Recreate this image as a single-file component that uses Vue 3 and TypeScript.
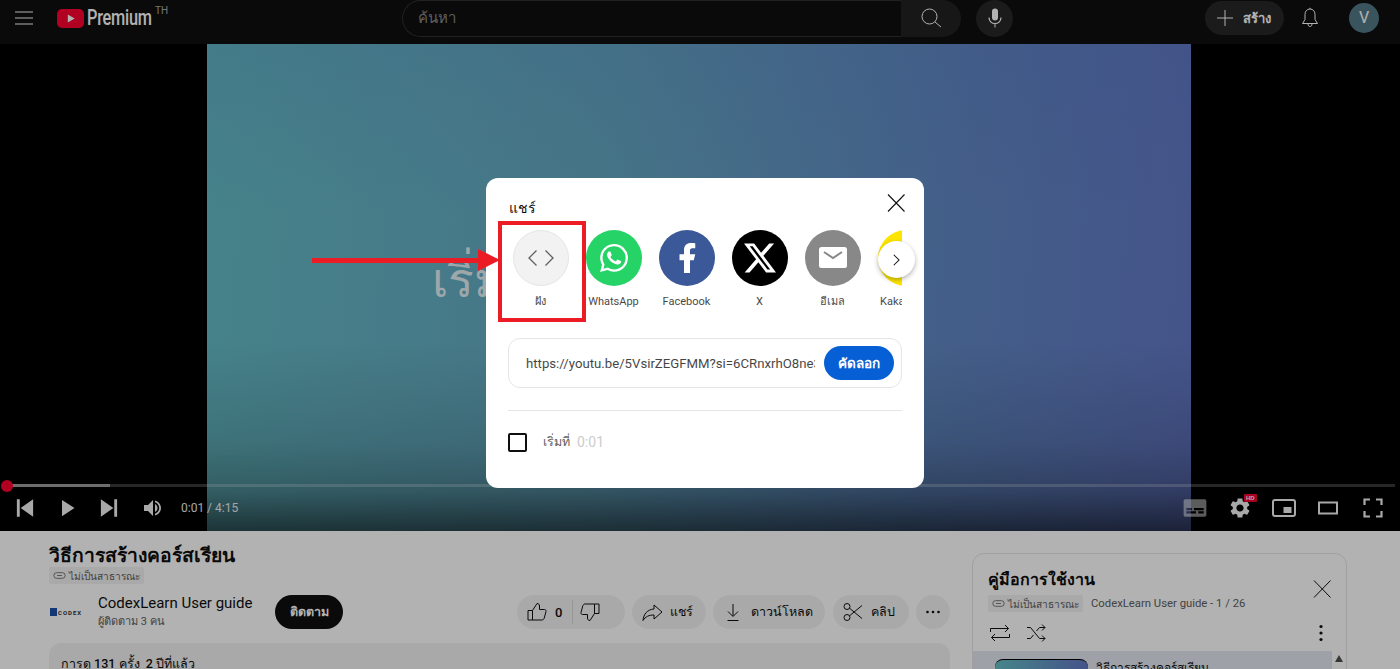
<script setup lang="ts">
interface Target { label: string; kind: string }
const targets: Target[] = [
  { label: 'ฝัง', kind: 'embed' },
  { label: 'WhatsApp', kind: 'whatsapp' },
  { label: 'Facebook', kind: 'facebook' },
  { label: 'X', kind: 'x' },
  { label: 'อีเมล', kind: 'mail' },
  { label: 'KakaoTalk', kind: 'kakao' },
]
</script>

<template>
  <div class="page">
    <header class="masthead">
      <div class="start">
        <svg class="burger" viewBox="0 0 18 14" width="18" height="14" fill="none" stroke="#fff" stroke-width="1"><path d="M0 1h18M0 7h18M0 13h18" /></svg>
        <svg class="yt" viewBox="0 0 27 19" width="27" height="19"><rect width="27" height="19" rx="5" fill="#ff0033" /><path d="M10.800 5.500v8l6.800-4z" fill="#fff" /></svg>
        <span class="premium">Premium</span>
        <span class="country">TH</span>
      </div>
      <div class="search">
        <div class="search-input">ค้นหา</div>
        <div class="search-btn">
          <svg viewBox="0 0 24 24" width="24" height="24" fill="none" stroke="#fff" stroke-width="1"><circle cx="10.500" cy="10.500" r="7.500" /><path d="M16 16l6 5" /></svg>
        </div>
      </div>
      <div class="mic">
        <svg viewBox="0 0 24 24" width="24" height="24" fill="#fff"><rect x="9" y="2.500" width="6" height="12" rx="3" /><path d="M6 11.500c0 3.500 2.600 6 6 6s6-2.500 6-6" fill="none" stroke="#fff" stroke-width="1.200" /><path d="M11.500 17h1v4.500h-1z" /></svg>
      </div>
      <div class="end">
        <div class="create">
          <svg viewBox="0 0 24 24" width="24" height="24" fill="none" stroke="#fff" stroke-width="1"><path d="M12 4v16M4 12h16" /></svg>
          <span>สร้าง</span>
        </div>
        <svg class="bell" viewBox="0 0 24 24" width="24" height="24" fill="none" stroke="#fff" stroke-width="1"><path d="M12 3c-3.200 0-5 2.500-5 5.500v5L4.500 17.500h15L17 13.500v-5C17 5.500 15.200 3 12 3zM10 18c0 1.500.8 2.500 2 2.500s2-1 2-2.500M12 1.800V3" /></svg>
        <div class="avatar">V</div>
      </div>
    </header>

    <section class="video">
      <div class="frame">
        <span class="frame-text">เริ่มต้นใช้งาน</span>
      </div>
      <div class="shade"></div>
      <div class="player">
        <div class="progress">
          <div class="buffer"></div>
          <div class="dot"></div>
        </div>
        <div class="controls">
          <button class="ctl"><svg viewBox="0 0 24 24" width="30" height="30" fill="#fff"><path d="M5.500 5h2.300v14H5.500zM18.500 5v14L8.500 12z" /></svg></button>
          <button class="ctl"><svg viewBox="0 0 24 24" width="30" height="30" fill="#fff"><path d="M8 5.500v13L18 12z" /></svg></button>
          <button class="ctl"><svg viewBox="0 0 24 24" width="30" height="30" fill="#fff"><path d="M16.200 5h2.300v14h-2.300zM5.500 5v14l10-7z" /></svg></button>
          <button class="ctl"><svg viewBox="0 0 24 24" width="24" height="24" fill="#fff"><path d="M5 9v6h4l5 5V4L9 9H5zM18.500 12c0-1.770-1-3.290-2.500-4.030v8.050c1.500-.73 2.500-2.250 2.500-4.020z" /><path d="M16 4.500v1.800c2.400.8 4.200 3 4.200 5.700s-1.800 4.900-4.200 5.700v1.800c3.400-.9 6-3.900 6-7.500s-2.600-6.600-6-7.500z" /></svg></button>
          <span class="time">0:01 / 4:15</span>
          <div class="controls-end">
            <button class="ctl wide"><svg viewBox="0 0 24 24" width="26" height="26" class="dim"><path fill="#fff" fill-rule="evenodd" d="M3 4h18a1.500 1.500 0 0 1 1.500 1.500v13A1.500 1.500 0 0 1 21 20H3a1.500 1.500 0 0 1-1.500-1.500v-13A1.500 1.500 0 0 1 3 4zm1 8v2h5v-2zm7 0v2h9v-2zm-7 3v2h9v-2zm11 0v2h5v-2z" /></svg></button>
            <button class="ctl wide gear">
              <svg viewBox="0 0 24 24" width="24" height="24" fill="#fff"><path d="M19.140 12.940c.04-.3.06-.61.06-.94 0-.32-.02-.64-.07-.94l2.030-1.580a.49.49 0 0 0 .12-.61l-1.920-3.320a.488.488 0 0 0-.59-.22l-2.390.96c-.5-.38-1.030-.7-1.620-.94l-.36-2.540a.484.484 0 0 0-.48-.41h-3.840c-.24 0-.43.17-.47.41l-.36 2.540c-.59.24-1.130.57-1.620.94l-2.390-.96c-.22-.08-.47 0-.59.22L2.740 8.870c-.12.21-.08.47.12.61l2.030 1.580c-.05.3-.09.63-.09.94s.02.64.07.94l-2.030 1.580a.49.49 0 0 0-.12.61l1.920 3.320c.12.22.37.29.59.22l2.390-.96c.5.38 1.030.7 1.620.94l.36 2.540c.05.24.24.41.48.41h3.840c.24 0 .44-.17.47-.41l.36-2.540c.59-.24 1.130-.56 1.620-.94l2.390.96c.22.08.47 0 .59-.22l1.920-3.320c.12-.22.07-.47-.12-.61l-2.010-1.580zM12 15.600c-1.980 0-3.600-1.620-3.600-3.600s1.620-3.600 3.600-3.600 3.600 1.620 3.600 3.600-1.620 3.600-3.600 3.600z" /></svg>
              <span class="hd">HD</span>
            </button>
            <button class="ctl wide"><svg viewBox="0 0 24 24" width="24" height="24" fill="none" stroke="#fff" stroke-width="2"><rect x="1" y="4" width="22" height="16" rx="2" /><rect x="11.500" y="11" width="8" height="6" fill="#fff" stroke="none" /></svg></button>
            <button class="ctl wide"><svg viewBox="0 0 24 24" width="24" height="24" fill="none" stroke="#fff" stroke-width="2"><rect x="3" y="6.500" width="18" height="11" /></svg></button>
            <button class="ctl wide"><svg viewBox="0 0 24 24" width="24" height="24" fill="none" stroke="#fff" stroke-width="2.200"><path d="M3.500 9V3.500H9M15 3.500h5.500V9M20.500 15v5.500H15M9 20.500H3.500V15" /></svg></button>
          </div>
        </div>
      </div>
    </section>

    <section class="below">
      <div class="primary">
        <h1 class="title">วิธีการสร้างคอร์สเรียน</h1>
        <div class="badge">
          <svg viewBox="0 0 16 10" width="13" height="9" fill="none" stroke="#606060" stroke-width="1"><rect x="1" y="1.500" width="14" height="7" rx="3.500" /><path d="M5 5h6" /></svg>
          ไม่เป็นสาธารณะ
        </div>
        <div class="meta">
          <div class="channel-logo"><i></i><span>CODEX</span></div>
          <div class="channel">
            <div class="channel-name">CodexLearn User guide</div>
            <div class="channel-subs">ผู้ติดตาม 3 คน</div>
          </div>
          <div class="subscribe">ติดตาม</div>
          <div class="actions">
            <div class="pill like">
              <svg viewBox="0 0 24 24" width="24" height="24" fill="none" stroke="#0f0f0f" stroke-width="1"><path d="M3 10.500h4.500V20H3zM7.500 10.500 12 3.500c1.600 0 2.500 1 2.500 2.500v3.500h5c1.100 0 1.800 1 1.500 2l-1.800 6.700c-.3.900-1 1.800-2.200 1.800H7.500" /></svg>
              <span class="count">0</span>
              <span class="sep"></span>
              <svg viewBox="0 0 24 24" width="24" height="24" fill="none" stroke="#0f0f0f" stroke-width="1"><path d="M21 13.500h-4.500V4H21zM16.500 13.500 12 20.500c-1.600 0-2.500-1-2.500-2.500v-3.500h-5c-1.100 0-1.800-1-1.500-2l1.800-6.700C5.100 4.900 5.800 4 7 4h9.500" /></svg>
            </div>
            <div class="pill share">
              <svg viewBox="0 0 24 24" width="24" height="24" fill="none" stroke="#0f0f0f" stroke-width="1"><path d="M14 5l8 7-8 7v-4c-5 0-8.500 1.500-11 5.500C3.500 14 7.500 9.500 14 9z" /></svg>
              <span>แชร์</span>
            </div>
            <div class="pill download">
              <svg viewBox="0 0 24 24" width="24" height="24" fill="none" stroke="#0f0f0f" stroke-width="1"><path d="M12 4v12M7 11.500l5 5 5-5M6.500 20.500h11" /></svg>
              <span>ดาวน์โหลด</span>
            </div>
            <div class="pill clip">
              <svg viewBox="0 0 24 24" width="24" height="24" fill="none" stroke="#0f0f0f" stroke-width="1"><circle cx="6" cy="6.500" r="3" /><circle cx="6" cy="17.500" r="3" /><path d="M8.500 8.200 21 18.500M8.500 15.800 21 5.500" /></svg>
              <span>คลิป</span>
            </div>
            <div class="more">
              <svg viewBox="0 0 24 24" width="24" height="24" fill="#0f0f0f"><circle cx="6.500" cy="12" r="1.300" /><circle cx="12" cy="12" r="1.300" /><circle cx="17.500" cy="12" r="1.300" /></svg>
            </div>
          </div>
        </div>
        <div class="description">การดู 131 ครั้ง&nbsp;&nbsp;2 ปีที่แล้ว</div>
      </div>

      <aside class="playlist">
        <div class="pl-head">
          <div class="pl-info">
            <div class="pl-title">คู่มือการใช้งาน</div>
            <div class="pl-sub">
              <div class="badge pl-badge">
                <svg viewBox="0 0 16 10" width="13" height="9" fill="none" stroke="#606060" stroke-width="1"><rect x="1" y="1.500" width="14" height="7" rx="3.500" /><path d="M5 5h6" /></svg>
                ไม่เป็นสาธารณะ
              </div>
              <span class="pl-owner">CodexLearn User guide - 1 / 26</span>
            </div>
          </div>
          <svg class="pl-close" viewBox="0 0 24 24" width="24" height="24" fill="none" stroke="#0f0f0f" stroke-width="1"><path d="M4 3.500l16.500 17M20.500 3.500 4 20.500" /></svg>
        </div>
        <div class="pl-tools">
          <svg viewBox="0 0 24 24" width="24" height="24" fill="none" stroke="#0f0f0f" stroke-width="1"><path d="M2.500 11V7.500h18M17 4l3.500 3.500L17 11M21.500 13v3.500h-18M7 20l-3.500-3.500L7 13" /></svg>
          <svg viewBox="0 0 24 24" width="24" height="24" fill="none" stroke="#0f0f0f" stroke-width="1"><path d="M3 6.500h3.500l9 11H21M3 17.500h3.500l3-3.600M12.500 10l3-3.500H21M18 3.500l3 3-3 3M18 14.500l3 3-3 3" /></svg>
          <svg class="pl-kebab" viewBox="0 0 24 24" width="24" height="24" fill="#0f0f0f"><circle cx="12" cy="5.500" r="1.600" /><circle cx="12" cy="12" r="1.600" /><circle cx="12" cy="18.500" r="1.600" /></svg>
        </div>
        <div class="pl-body">
          <div class="pl-row">
            <div class="pl-thumb"></div>
            <div class="pl-item-title">วิธีการสร้างคอร์สเรียน</div>
          </div>
          <div class="pl-scroll"><i></i></div>
        </div>
      </aside>
    </section>

    <div class="scrim"></div>

    <div class="dialog">
      <div class="dialog-head">
        <span class="dialog-title">แชร์</span>
        <svg class="dialog-close" viewBox="0 0 24 24" width="24" height="24" fill="none" stroke="#0f0f0f" stroke-width="1.100"><path d="M4 3.500l16.500 17M20.500 3.500 4 20.500" /></svg>
      </div>
      <div class="targets">
        <div v-for="t in targets" :key="t.kind" class="target">
          <div class="disc" :class="t.kind">
            <svg v-if="t.kind === 'embed'" viewBox="0 0 28 20" width="30" height="20" fill="none" stroke="#606060" stroke-width="1.300"><path d="M9.500 2.500 2 10l7.500 7.500M18.500 2.500 26 10l-7.500 7.500" /></svg>
            <svg v-else-if="t.kind === 'whatsapp'" viewBox="0 0 24 24" width="28" height="28" fill="#fff"><path d="M17.472 14.382c-.297-.149-1.758-.867-2.030-.967-.273-.099-.471-.148-.67.150-.197.297-.767.966-.94 1.164-.173.199-.347.223-.644.075-.297-.15-1.255-.463-2.390-1.475-.883-.788-1.480-1.761-1.653-2.059-.173-.297-.018-.458.130-.606.134-.133.298-.347.446-.52.149-.174.198-.298.298-.497.099-.198.050-.371-.025-.52-.075-.149-.669-1.612-.916-2.207-.242-.579-.487-.5-.669-.51-.173-.008-.371-.010-.570-.010-.198 0-.52.074-.792.372-.272.297-1.040 1.016-1.040 2.479 0 1.462 1.065 2.875 1.213 3.074.149.198 2.096 3.200 5.077 4.487.709.306 1.262.489 1.694.625.712.227 1.360.195 1.871.118.571-.085 1.758-.719 2.006-1.413.248-.694.248-1.289.173-1.413-.074-.124-.272-.198-.57-.347m-5.421 7.403h-.004a9.870 9.870 0 0 1-5.031-1.378l-.361-.214-3.741.982.998-3.648-.235-.374a9.860 9.860 0 0 1-1.510-5.260c.001-5.450 4.436-9.884 9.888-9.884 2.640 0 5.122 1.030 6.988 2.898a9.825 9.825 0 0 1 2.893 6.994c-.003 5.450-4.437 9.884-9.885 9.884m8.413-18.297A11.815 11.815 0 0 0 12.050 0C5.495 0 .16 5.335.157 11.892c0 2.096.547 4.142 1.588 5.945L.057 24l6.305-1.654a11.882 11.882 0 0 0 5.683 1.448h.005c6.554 0 11.890-5.335 11.893-11.893a11.821 11.821 0 0 0-3.480-8.413z" /></svg>
            <svg v-else-if="t.kind === 'facebook'" viewBox="0 0 24 24" width="36" height="36" fill="#fff"><path d="M14 13.500h2.500l1-4H14v-2c0-1.030 0-2 2-2h1.500V2.140c-.326-.043-1.557-.14-2.857-.14C11.928 2 10 3.657 10 6.700v2.800H7v4h3V22h4v-8.500z" /></svg>
            <svg v-else-if="t.kind === 'x'" viewBox="0 0 24 24" width="32" height="32" fill="#fff"><path d="M18.901 1.153h3.680l-8.040 9.190L24 22.846h-7.406l-5.800-7.584-6.638 7.584H.474l8.600-9.830L0 1.154h7.594l5.243 6.932ZM17.610 20.644h2.039L6.486 3.240H4.298Z" /></svg>
            <svg v-else-if="t.kind === 'mail'" viewBox="0 0 28 22" width="28" height="22"><rect width="28" height="21" rx="2.500" fill="#fff" /><path d="M5 5l9 6 9-6" fill="none" stroke="#888" stroke-width="2" /></svg>
          </div>
          <div class="target-label">{{ t.label }}</div>
        </div>
      </div>
      <div class="next">
        <svg viewBox="0 0 24 24" width="18" height="18" fill="none" stroke="#0f0f0f" stroke-width="1.400"><path d="M9 5l7 7-7 7" /></svg>
      </div>
      <div class="link">
        <span class="link-text">https://youtu.be/5VsirZEGFMM?si=6CRnxrhO8ne3</span>
        <div class="copy">คัดลอก</div>
      </div>
      <div class="divider"></div>
      <div class="start-at">
        <span class="check"></span>
        <span class="start-label">เริ่มที่</span>
        <span class="start-time">0:01</span>
      </div>
    </div>

    <div class="mark-box"></div>
    <div class="mark-arrow"></div>
  </div>
</template>

<style>
html, body { margin: 0; background: #fff; overflow: hidden; }
</style>

<style scoped>
.page {
  position: relative;
  width: 1400px;
  height: 669px;
  overflow: hidden;
  background: #fff;
  color: #0f0f0f;
  font-family: Roboto, "Noto Sans", sans-serif;
}
.masthead {
  box-sizing: border-box;
  height: 44px;
  padding-bottom: 8px;
  display: flex;
  align-items: center;
  background: #0f0f0f;
  color: #fff;
}
.start {
  width: 402px;
  flex: none;
  display: flex;
  align-items: center;
  position: relative;
}
.burger { margin-left: 15px; }
.yt { margin-left: 24px; }
.premium {
  margin-left: 3px;
  font-size: 22px;
  font-weight: 500;
  letter-spacing: -.3px;
  transform: scaleX(.74);
  transform-origin: left center;
  line-height: 24px;
}
.country {
  position: absolute;
  left: 155px;
  top: -1px;
  font-size: 10px;
  color: #aaa;
}
.search { display: flex; height: 37px; width: 559px; flex: none; }
.search-input {
  box-sizing: border-box;
  width: 499px;
  border: 1px solid #303030;
  border-right: 0;
  border-radius: 19px 0 0 19px;
  padding-left: 15px;
  font-size: 15px;
  line-height: 35px;
  color: #888;
}
.search-btn {
  width: 60px;
  background: #222;
  border-radius: 0 19px 19px 0;
  display: flex;
  align-items: center;
  justify-content: center;
}
.mic {
  margin-left: 15px;
  width: 37px;
  height: 37px;
  border-radius: 50%;
  background: #272727;
  display: flex;
  align-items: center;
  justify-content: center;
}
.end { margin-left: auto; padding-right: 21px; display: flex; align-items: center; }
.create {
  box-sizing: border-box;
  width: 79px;
  height: 34px;
  border-radius: 17px;
  background: #272727;
  display: flex;
  align-items: center;
  padding-left: 8px;
  gap: 6px;
  font-size: 13px;
  font-weight: 700;
}
.bell { margin-left: 14px; }
.avatar {
  margin-left: 27px;
  width: 30px;
  height: 30px;
  border-radius: 50%;
  background: #547987;
  text-align: center;
  line-height: 30px;
  font-size: 16px;
}

.video {
  position: relative;
  height: 487px;
  background: #000;
  display: flex;
  justify-content: center;
  padding-right: 2px;
}
.frame {
  box-sizing: border-box;
  width: 984px;
  background:
    linear-gradient(to bottom, rgba(70,100,190,.12), rgba(70,100,190,0) 35%),
    linear-gradient(95deg, #65bcc6 0%, #65a8c2 40%, #6188c4 75%, #6378c6 100%);
  display: flex;
  align-items: center;
  padding: 0 0 15px 225px;
}
.frame-text {
  font-size: 48px;
  font-weight: 300;
  color: rgba(255,255,255,.82);
  white-space: nowrap;
  font-family: "Open Sans", Roboto, sans-serif;
}
.shade {
  position: absolute;
  left: 0;
  right: 0;
  bottom: 0;
  height: 190px;
  background: linear-gradient(to bottom, rgba(0,0,0,0) 0%, rgba(0,0,0,.12) 53%, rgba(0,0,0,.28) 79%, rgba(0,0,0,.6) 100%);
}
.player { position: absolute; left: 0; right: 0; bottom: 0; }
.progress {
  position: relative;
  margin: 0 5px 0 4px;
  height: 3px;
  background: rgba(255,255,255,.22);
}
.buffer { width: 106px; height: 3px; background: rgba(255,255,255,.5); }
.dot {
  position: absolute;
  left: -3px;
  top: -4.500px;
  width: 12px;
  height: 12px;
  border-radius: 50%;
  background: #f03;
}
.controls {
  box-sizing: border-box;
  height: 44px;
  padding: 0 5px 2px 4px;
  display: flex;
  align-items: center;
}
.ctl {
  flex: none;
  width: 42px;
  height: 42px;
  padding: 0;
  border: 0;
  background: none;
  display: flex;
  align-items: center;
  justify-content: center;
  opacity: .95;
}
.ctl.wide { width: 44.500px; position: relative; }
.dim { opacity: .55; }
.time { margin-left: 9px; font-size: 12px; color: #eee; }
.controls-end { margin-left: auto; display: flex; }
.gear svg { margin-left: 1px; }
.hd {
  position: absolute;
  left: 27px;
  top: 7px;
  padding: 0 2px;
  background: #f03;
  color: #fff;
  border-radius: 1px;
  font-size: 6px;
  line-height: 8px;
  font-weight: 700;
}

.below { display: flex; padding: 22px 0 0 49px; height: 116px; }
.primary { width: 901px; flex: none; margin-top: -11px; }
.title { margin: 0; font-size: 19.300px; line-height: 28px; font-weight: 700; height: 25px; }
.badge {
  box-sizing: border-box;
  display: inline-flex;
  align-items: center;
  gap: 3px;
  height: 17px;
  padding: 0 4px;
  background: rgba(0,0,0,.05);
  border-radius: 2px;
  font-size: 10.100px;
  color: #606060;
  vertical-align: top;
  white-space: nowrap;
}
.meta { display: flex; align-items: center; height: 34px; margin-top: 9px; }
.channel-logo { width: 36px; display: flex; align-items: center; gap: 1px; flex: none; margin-left: 1px; }
.channel-logo i { width: 7px; height: 8px; background: #1d4fa8; flex: none; }
.channel-logo span { font-size: 6px; letter-spacing: 1px; font-weight: 700; color: #333; }
.channel { margin-left: 12px; width: 177px; flex: none; padding-top: 1px; }
.channel-name { font-size: 15px; line-height: 18px; white-space: nowrap; }
.channel-subs { font-size: 11px; line-height: 19px; color: #606060; }
.subscribe {
  width: 68px;
  height: 34px;
  border-radius: 17px;
  background: #0f0f0f;
  color: #fff;
  text-align: center;
  font-size: 12.500px;
  font-weight: 700;
  line-height: 34px;
}
.actions { margin-left: auto; display: flex; gap: 7px; }
.pill {
  box-sizing: border-box;
  height: 34px;
  border-radius: 17px;
  background: rgba(0,0,0,.05);
  display: flex;
  align-items: center;
  padding: 0 0 0 8px;
  gap: 6px;
  font-size: 12.500px;
  font-weight: 500;
  white-space: nowrap;
}
.like { width: 108px; gap: 0; }
.share { width: 74px; }
.download { width: 112px; gap: 6px; }
.clip { width: 76px; margin-left: 1px; }
.count { margin-left: 6px; font-size: 13px; }
.sep { width: 1px; height: 24px; background: rgba(0,0,0,.1); margin: 0 5px 0 10px; }
.more {
  width: 34px;
  height: 34px;
  border-radius: 50%;
  background: rgba(0,0,0,.05);
  display: flex;
  align-items: center;
  justify-content: center;
}
.description {
  margin-top: 14px;
  padding: 11px 12px;
  height: 60px;
  border-radius: 12px;
  background: rgba(0,0,0,.05);
  font-size: 12.500px;
  font-weight: 500;
  line-height: 20px;
}

.playlist {
  box-sizing: border-box;
  margin-left: 22px;
  width: 375px;
  height: 160px;
  flex: none;
  border: 1px solid rgba(0,0,0,.1);
  border-radius: 12px;
  overflow: hidden;
}
.pl-head { display: flex; padding: 12px 12px 0 15px; }
.pl-info { flex: 1; }
.pl-title { font-size: 16px; font-weight: 700; line-height: 27px; height: 25px; }
.pl-sub { display: flex; align-items: center; gap: 8px; margin-top: 4px; }
.pl-owner { font-size: 11.300px; color: #606060; }
.pl-close { margin-top: 11px; }
.pl-tools { display: flex; align-items: center; gap: 12px; padding: 5px 13px 0 15px; height: 31px; }
.pl-kebab { margin-left: auto; }
.pl-body { display: flex; margin-top: 3px; }
.pl-row {
  width: 359px;
  flex: none;
  height: 60px;
  background: #e2e7f1;
  display: flex;
  padding: 8px 0 0 22px;
  box-sizing: border-box;
}
.pl-thumb {
  width: 93px;
  height: 52px;
  border-radius: 8px;
  background: linear-gradient(90deg, #65bfc4, #6378c6);
  border-top: 1px solid #000;
  box-sizing: border-box;
}
.pl-item-title { margin-left: 8px; font-size: 12px; font-weight: 500; line-height: 18px; }
.pl-scroll { flex: 1; padding-top: 4px; display: flex; justify-content: center; }
.pl-scroll i {
  width: 0;
  height: 0;
  border-left: 4.500px solid transparent;
  border-right: 4.500px solid transparent;
  border-bottom: 7px solid #505050;
}

.scrim { position: absolute; inset: 0; background: rgba(0,0,0,.3); }

.dialog {
  position: absolute;
  left: 486px;
  top: 178px;
  box-sizing: border-box;
  width: 438px;
  height: 310px;
  padding: 0 22px;
  background: #fff;
  border-radius: 12px;
}
.dialog-head {
  display: flex;
  align-items: center;
  justify-content: space-between;
  height: 38px;
  padding: 5px 0 0 1px;
}
.dialog-title { font-size: 14px; margin-top: 11px; }
.dialog-close { margin-right: -6px; margin-top: 1px; }
.targets {
  display: flex;
  margin-top: 9px;
  margin-left: -4px;
  overflow: hidden;
  width: 398px;
}
.target { width: 73px; flex: none; display: flex; flex-direction: column; align-items: center; }
.disc {
  width: 56px;
  height: 56px;
  border-radius: 50%;
  display: flex;
  align-items: center;
  justify-content: center;
  box-sizing: border-box;
}
.embed { background: #f2f2f2; border: 1px solid #e5e5e5; }
.whatsapp { background: #25d366; }
.facebook { background: #3b5998; }
.x { background: #000; }
.mail { background: #888; }
.kakao { background: #fee500; }
.target-label { margin-top: 7px; font-size: 11px; line-height: 18px; color: #0f0f0f; white-space: nowrap; opacity: .78; }
.next {
  position: absolute;
  left: 391.500px;
  top: 63px;
  width: 37px;
  height: 37px;
  border-radius: 50%;
  background: #fff;
  box-shadow: 0 2px 5px rgba(0,0,0,.3);
  display: flex;
  align-items: center;
  justify-content: center;
}
.link {
  box-sizing: border-box;
  margin-top: 27px;
  height: 50px;
  border: 1px solid #e5e5e5;
  border-radius: 12px;
  display: flex;
  align-items: center;
  padding: 0 7px 0 17px;
}
.link-text {
  width: 289px;
  flex: none;
  overflow: hidden;
  white-space: nowrap;
  font-size: 13.200px;
  color: #0f0f0f;
  opacity: .78;
}
.copy {
  margin-left: auto;
  width: 70px;
  height: 34px;
  border-radius: 17px;
  background: #065fd4;
  color: #fff;
  text-align: center;
  line-height: 34px;
  font-size: 13.500px;
  font-weight: 700;
}
.divider { margin-top: 22px; height: 1px; background: #e5e5e5; }
.start-at { display: flex; align-items: center; margin-top: 21px; height: 20px; font-size: 14px; }
.check {
  box-sizing: border-box;
  width: 19px;
  height: 19px;
  border: 2px solid #0f0f0f;
  border-radius: 2px;
}
.start-label { margin-left: 16px; color: #606060; font-size: 12.500px; }
.start-time { margin-left: 7px; color: #ccc; }

.mark-box {
  position: absolute;
  left: 498px;
  top: 221px;
  box-sizing: border-box;
  width: 88px;
  height: 101px;
  border: 4px solid #ec1c24;
}
.mark-arrow {
  position: absolute;
  left: 312px;
  top: 258px;
  width: 168px;
  height: 5px;
  background: #ec1c24;
}
.mark-arrow::after {
  content: "";
  position: absolute;
  left: 166px;
  top: -9px;
  width: 0;
  height: 0;
  border-top: 11.500px solid transparent;
  border-bottom: 11.500px solid transparent;
  border-left: 22px solid #ec1c24;
}
</style>
